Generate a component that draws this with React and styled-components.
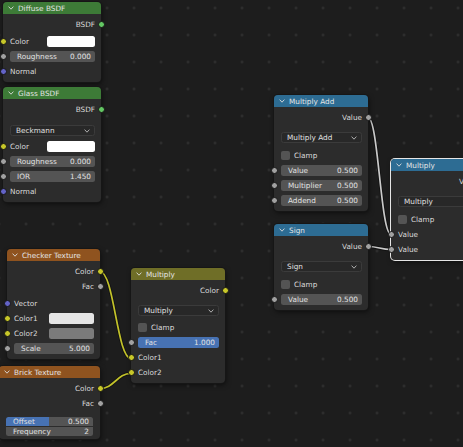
import React from 'react';
import styled, { createGlobalStyle } from 'styled-components';

const GlobalStyle = createGlobalStyle`
  *, *::before, *::after { box-sizing: border-box; }
  html, body { margin: 0; padding: 0; background: #1d1d1d; }
  body { font-family: "DejaVu Sans", "Liberation Sans", sans-serif; }
`;

const SOCKET = {
  float: '#a1a1a1',
  color: '#c7c729',
  vector: '#6363c7',
  shader: '#63c763',
};

const Canvas = styled.div`
  position: relative;
  width: 463px;
  height: 447px;
  overflow: hidden;
  background-color: #1d1d1d;
  background-image: radial-gradient(circle, #343434 0.9px, transparent 1.5px);
  background-size: 27px 27px;
  background-position: 12.5px -5.5px;
  font-family: "DejaVu Sans", "Liberation Sans", sans-serif;
  font-size: 7.3px;
  color: #dcdcdc;
`;

const Wires = styled.svg`
  position: absolute;
  left: 0;
  top: 0;
  width: 463px;
  height: 447px;
`;

const Node = styled.div`
  position: absolute;
  left: ${p => p.$x}px;
  top: ${p => p.$y}px;
  width: ${p => p.$w}px;
  background: #2c2c2c;
  border-radius: 4px;
  padding-bottom: 3px;
  box-shadow: 0 0 0 1px ${p => (p.$selected ? '#e6e6e6' : '#161616')},
    1px 2px 5px rgba(0, 0, 0, 0.55);
`;

const Header = styled.div`
  height: 12px;
  display: flex;
  align-items: center;
  gap: 4px;
  padding-left: 5px;
  background: ${p => p.$color};
  border-radius: 4px 4px 0 0;
  color: #e4e4e4;
  white-space: nowrap;
`;

const Body = styled.div`
  padding-top: 3px;
  display: flex;
  flex-direction: column;
`;

const Row = styled.div`
  position: relative;
  height: ${p => p.$h || 15}px;
  display: flex;
  align-items: center;
  justify-content: ${p => (p.$out ? 'flex-end' : 'space-between')};
  gap: 4px;
  padding: 0 6px 0 7px;
  white-space: nowrap;
`;

const Spacer = styled.div`
  height: ${p => p.$h}px;
`;

const Socket = styled.span`
  position: absolute;
  top: 50%;
  ${p => (p.$side === 'right' ? 'right: -3.5px;' : 'left: -3.5px;')}
  width: 7px;
  height: 7px;
  margin-top: -3.5px;
  border-radius: 50%;
  background: ${p => p.$color};
  border: 0.5px solid #151515;
`;

const Label = styled.span`
  color: #dadada;
`;

const Swatch = styled.div`
  width: 56%;
  height: 11px;
  border-radius: 2.5px;
  background: ${p => p.$color};
`;

const fieldBg = fill => {
  if (fill >= 1) return '#4772b3';
  if (fill > 0) return `linear-gradient(90deg, #4772b3 ${fill * 100}%, #545454 ${fill * 100}%)`;
  return '#545454';
};

const Field = styled.div`
  flex: 1;
  height: ${p => p.$h || 11}px;
  display: flex;
  align-items: center;
  justify-content: space-between;
  padding: 0 4px 0 7px;
  border-radius: ${p =>
    p.$pos === 'top' ? '2.5px 2.5px 0 0' : p.$pos === 'bottom' ? '0 0 2.5px 2.5px' : '2.5px'};
  background: ${p => fieldBg(p.$fill)};
  color: #e2e2e2;
`;

const Stack = styled.div`
  display: flex;
  flex-direction: column;
  gap: 1px;
  padding: 0 7px;
`;

const Select = styled.div`
  flex: 1;
  height: 11px;
  display: flex;
  align-items: center;
  justify-content: space-between;
  padding: 0 4px 0 5px;
  background: #282828;
  border: 1px solid #3b3b3b;
  border-radius: 2.5px;
  color: #e0e0e0;
`;

const Check = styled.div`
  display: flex;
  align-items: center;
  gap: 4px;
`;

const Box = styled.span`
  width: 9px;
  height: 9px;
  border-radius: 2px;
  background: #545454;
`;

const Chevron = ({ color = '#dddddd' }) => (
  <svg width="6" height="4" viewBox="0 0 6 4">
    <path d="M0.6 0.6 L3 3.2 L5.4 0.6" fill="none" stroke={color} strokeWidth="0.9" />
  </svg>
);

const Output = ({ label, type }) => (
  <Row $out>
    <Label>{label}</Label>
    <Socket $side="right" $color={SOCKET[type]} />
  </Row>
);

const Input = ({ label, type, swatch }) => (
  <Row>
    <Label>{label}</Label>
    {swatch && <Swatch $color={swatch} />}
    <Socket $color={SOCKET[type]} />
  </Row>
);

const Value = ({ label, value, type, fill }) => (
  <Row>
    <Field $fill={fill}>
      <span>{label}</span>
      <span>{value}</span>
    </Field>
    {type && <Socket $color={SOCKET[type]} />}
  </Row>
);

const Dropdown = ({ label }) => (
  <Row>
    <Select>
      <span>{label}</span>
      <Chevron color="#bcbcbc" />
    </Select>
  </Row>
);

const Clamp = () => (
  <Row>
    <Check>
      <Box />
      <Label>Clamp</Label>
    </Check>
  </Row>
);

const NodeBox = ({ x, y, w, color, title, selected, children }) => (
  <Node $x={x} $y={y} $w={w} $selected={selected}>
    <Header $color={color}>
      <Chevron />
      <span>{title}</span>
    </Header>
    <Body>{children}</Body>
  </Node>
);

const GREEN = '#3d7b37';
const ORANGE = '#8f531f';
const OLIVE = '#6f6e27';
const BLUE = '#2d6c93';

const wire = (x1, y1, x2, y2) => {
  const h = Math.max(10, Math.abs(x2 - x1) * 0.45);
  return `M${x1},${y1} C${x1 + h},${y1} ${x2 - h},${y2} ${x2},${y2}`;
};

const links = [
  { d: wire(368, 117.5, 391, 234.5), c: '#cacaca' },
  { d: wire(368, 246.5, 391, 249.5), c: '#cacaca' },
  { d: wire(100, 271.5, 131, 358.5), c: '#c2c22a' },
  { d: wire(100, 388.5, 131, 373.5), c: '#c2c22a' },
];

export default function App() {
  return (
    <Canvas>
      <GlobalStyle />
      <Wires viewBox="0 0 463 447">
        {links.map((l, i) => (
          <g key={i} fill="none">
            <path d={l.d} stroke="#121212" strokeWidth="3.4" />
            <path d={l.d} stroke={l.c} strokeWidth="1.7" />
          </g>
        ))}
      </Wires>

      <NodeBox x={3} y={2} w={98} color={GREEN} title="Diffuse BSDF">
        <Output label="BSDF" type="shader" />
        <Spacer $h={2} />
        <Input label="Color" type="color" swatch="#ffffff" />
        <Value label="Roughness" value="0.000" type="float" />
        <Input label="Normal" type="vector" />
      </NodeBox>

      <NodeBox x={3} y={87} w={98} color={GREEN} title="Glass BSDF">
        <Output label="BSDF" type="shader" />
        <Spacer $h={6} />
        <Dropdown label="Beckmann" />
        <Spacer $h={1} />
        <Input label="Color" type="color" swatch="#ffffff" />
        <Value label="Roughness" value="0.000" type="float" />
        <Value label="IOR" value="1.450" type="float" />
        <Input label="Normal" type="vector" />
      </NodeBox>

      <NodeBox x={7} y={249} w={93} color={ORANGE} title="Checker Texture">
        <Output label="Color" type="color" />
        <Output label="Fac" type="float" />
        <Spacer $h={2} />
        <Input label="Vector" type="vector" />
        <Input label="Color1" type="color" swatch="#e6e6e6" />
        <Input label="Color2" type="color" swatch="#7b7b7b" />
        <Value label="Scale" value="5.000" type="float" />
      </NodeBox>

      <NodeBox x={-1} y={366} w={101} color={ORANGE} title="Brick Texture">
        <Output label="Color" type="color" />
        <Output label="Fac" type="float" />
        <Spacer $h={6} />
        <Stack>
          <Field $h={13} $pos="top" $fill={0.49}>
            <span>Offset</span>
            <span>0.500</span>
          </Field>
          <Field $h={13} $pos="bottom">
            <span>Frequency</span>
            <span>2</span>
          </Field>
        </Stack>
      </NodeBox>

      <NodeBox x={131} y={268} w={94} color={OLIVE} title="Multiply">
        <Output label="Color" type="color" />
        <Spacer $h={5} />
        <Dropdown label="Multiply" />
        <Spacer $h={2} />
        <Clamp />
        <Value label="Fac" value="1.000" type="float" fill={1} />
        <Input label="Color1" type="color" />
        <Input label="Color2" type="color" />
      </NodeBox>

      <NodeBox x={274} y={95} w={94} color={BLUE} title="Multiply Add">
        <Output label="Value" type="float" />
        <Spacer $h={5} />
        <Dropdown label="Multiply Add" />
        <Spacer $h={3} />
        <Clamp />
        <Value label="Value" value="0.500" type="float" />
        <Value label="Multiplier" value="0.500" type="float" />
        <Value label="Addend" value="0.500" type="float" />
      </NodeBox>

      <NodeBox x={274} y={224} w={94} color={BLUE} title="Sign">
        <Output label="Value" type="float" />
        <Spacer $h={5} />
        <Dropdown label="Sign" />
        <Spacer $h={3} />
        <Clamp />
        <Value label="Value" value="0.500" type="float" />
      </NodeBox>

      <NodeBox x={391} y={159} w={94} color={BLUE} title="Multiply" selected>
        <Output label="Value" type="float" />
        <Spacer $h={5} />
        <Dropdown label="Multiply" />
        <Spacer $h={3} />
        <Clamp />
        <Input label="Value" type="float" />
        <Input label="Value" type="float" />
      </NodeBox>
    </Canvas>
  );
}
